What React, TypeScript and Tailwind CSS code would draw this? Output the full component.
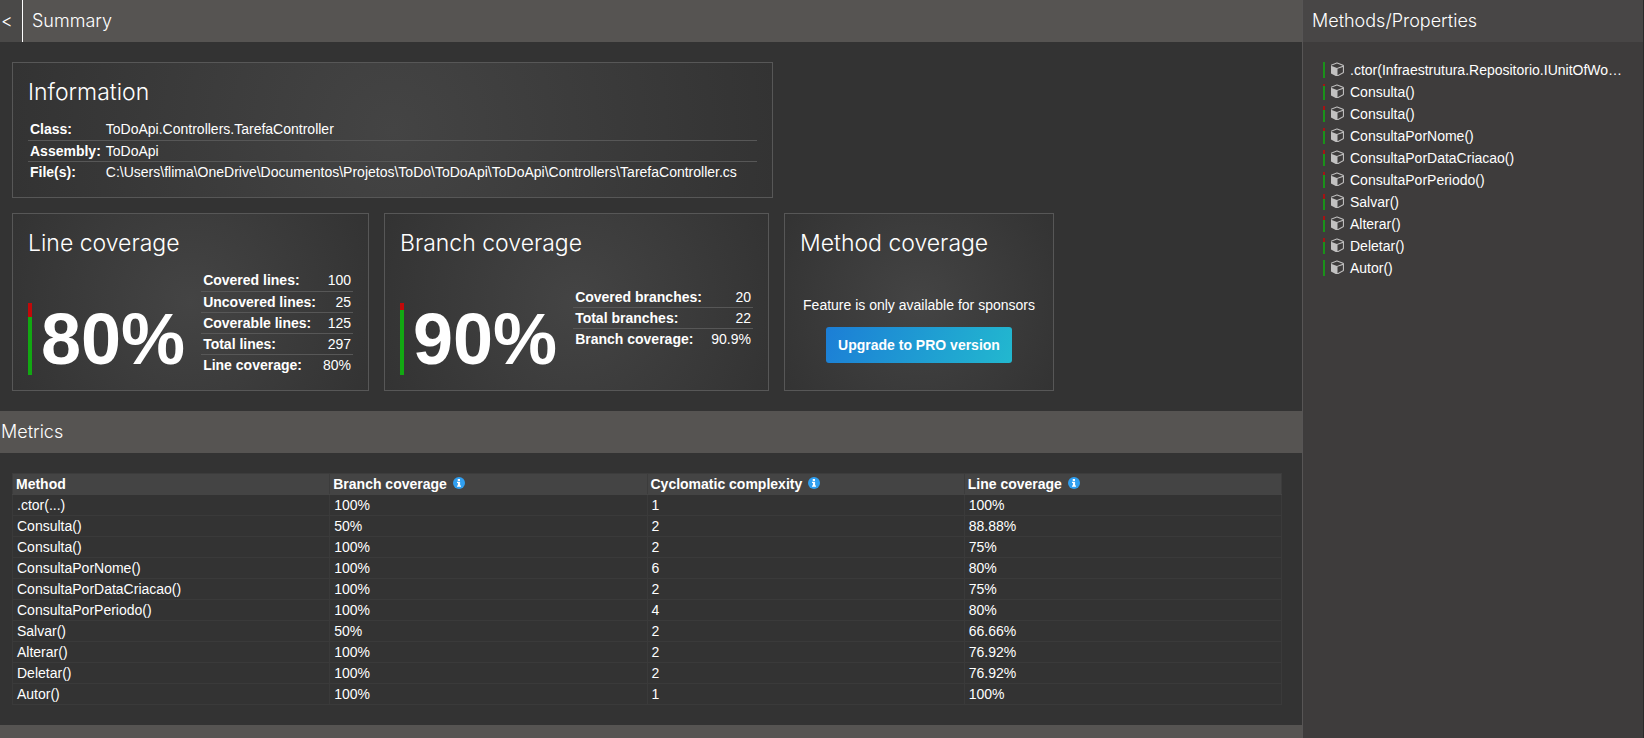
import type { ReactNode } from "react";

type MethodRow = {
  name: string;
  title: string;
  branch: string;
  complexity: number;
  line: string;
  covered: number;
};

const methods: MethodRow[] = [
  { name: ".ctor(...)", title: ".ctor(Infraestrutura.Repositorio.IUnitOfWo…", branch: "100%", complexity: 1, line: "100%", covered: 100 },
  { name: "Consulta()", title: "Consulta()", branch: "50%", complexity: 2, line: "88.88%", covered: 89 },
  { name: "Consulta()", title: "Consulta()", branch: "100%", complexity: 2, line: "75%", covered: 75 },
  { name: "ConsultaPorNome()", title: "ConsultaPorNome()", branch: "100%", complexity: 6, line: "80%", covered: 80 },
  { name: "ConsultaPorDataCriacao()", title: "ConsultaPorDataCriacao()", branch: "100%", complexity: 2, line: "75%", covered: 75 },
  { name: "ConsultaPorPeriodo()", title: "ConsultaPorPeriodo()", branch: "100%", complexity: 4, line: "80%", covered: 80 },
  { name: "Salvar()", title: "Salvar()", branch: "50%", complexity: 2, line: "66.66%", covered: 67 },
  { name: "Alterar()", title: "Alterar()", branch: "100%", complexity: 2, line: "76.92%", covered: 77 },
  { name: "Deletar()", title: "Deletar()", branch: "100%", complexity: 2, line: "76.92%", covered: 77 },
  { name: "Autor()", title: "Autor()", branch: "100%", complexity: 1, line: "100%", covered: 100 },
];

const headingFont = "font-['Century_Gothic','URW_Gothic',Inter,sans-serif] font-light";

function CubeIcon() {
  return (
    <svg viewBox="64 64 1536 1664" className="mb-[2px] h-[14px] w-[13px] shrink-0 fill-[#c2c1c1]" aria-hidden="true">
      <path d="M832 1629l640-349v-636l-640 233v752zm-64-865l698-254-698-254-698 254zm832-252v768q0 35-18 65t-49 47l-704 384q-28 16-61 16t-61-16l-704-384q-31-17-49-47t-18-65v-768q0-40 23-73t61-47l704-256q22-8 44-8t44 8l704 256q38 14 61 47t23 73z" />
    </svg>
  );
}

function InfoIcon() {
  return (
    <svg viewBox="0 0 24 24" className="h-3 w-3" aria-hidden="true">
      <circle cx="12" cy="12" r="12" fill="#309ff0" />
      <path fill="#fff" d="M9.5 4h4.5v4H9.500zM8 9.500h6.200v7.300H16V19.500H8v-2.700h1.800v-4.600H8z" />
    </svg>
  );
}

function Card({ title, width, children }: { title: string; width: string; children: ReactNode }) {
  return (
    <section className={`flex flex-col border border-[#575757] bg-[radial-gradient(circle,#444444,#333333)] px-[15px] pt-[13px] pb-[15px] ${width}`}>
      <h2 className={`${headingFont} text-[23px] leading-8`}>{title}</h2>
      {children}
    </section>
  );
}

function Facts({ rows, numeric }: { rows: [string, string][]; numeric?: boolean }) {
  return (
    <table className="w-full border-collapse leading-5">
      <tbody>
        {rows.map(([label, value]) => (
          <tr key={label} className="h-[21px] border-b border-[#575757] last:border-b-0">
            <th scope="row" className="w-px px-[2px] text-left font-bold whitespace-nowrap">{label}</th>
            <td className={numeric ? "pr-[2px] pl-1 text-right whitespace-nowrap" : "px-[3px] break-words"}>{value}</td>
          </tr>
        ))}
      </tbody>
    </table>
  );
}

function CoverageBar({ covered, className }: { covered: number; className: string }) {
  return (
    <span className={`flex shrink-0 flex-col bg-[#c10909] ${className}`}>
      <span className="mt-auto block bg-[#12a812]" style={{ height: `${covered}%` }} />
    </span>
  );
}

function BigPercentage({ value }: { value: number }) {
  return (
    <div className="flex shrink-0 items-end gap-[9px] self-end">
      <CoverageBar covered={value} className="h-[72px] w-1" />
      <span className="text-[72px] leading-[72px] font-bold">{value}%</span>
    </div>
  );
}

function HeaderCell({ children, info }: { children: string; info?: boolean }) {
  return (
    <th scope="col" className="border border-[#3c3c3c] border-b-[#444444] px-[3px] text-left font-bold">
      <span className="flex items-center gap-[6px]">
        {children}
        {info && (
          <a href="#info" aria-label={`About ${children}`} className="-mt-[2px]">
            <InfoIcon />
          </a>
        )}
      </span>
    </th>
  );
}

export default function App() {
  return (
    <div className="flex h-screen overflow-hidden bg-[#333333] font-['Liberation_Sans',Arial,sans-serif] text-[14px] leading-5 text-white">
      <main className="flex min-w-0 flex-1 flex-col overflow-hidden">
        <h1 className={`flex h-[42px] shrink-0 items-stretch bg-[#565452] text-[18px] ${headingFont}`}>
          <a href="#back" className="flex w-[23px] items-center border-r border-white bg-[#4a4948] pl-px">&lt;</a>
          <span className="flex items-center pl-[9px]">Summary</span>
        </h1>

        <div className="flex flex-wrap gap-[15px] px-3 py-5">
          <div className="flex w-full">
            <Card title="Information" width="min-w-[761px]">
              <div className="mt-[11px] flex flex-col">
                <Facts
                  rows={[
                    ["Class:", "ToDoApi.Controllers.TarefaController"],
                    ["Assembly:", "ToDoApi"],
                    ["File(s):", "C:\\Users\\flima\\OneDrive\\Documentos\\Projetos\\ToDo\\ToDoApi\\ToDoApi\\Controllers\\TarefaController.cs"],
                  ]}
                />
              </div>
            </Card>
          </div>
          <Card title="Line coverage" width="w-[357px]">
            <div className="mt-[2px] flex h-[114px] gap-4">
              <BigPercentage value={80} />
              <div className="flex-1 self-end">
                <Facts
                  numeric
                  rows={[
                    ["Covered lines:", "100"],
                    ["Uncovered lines:", "25"],
                    ["Coverable lines:", "125"],
                    ["Total lines:", "297"],
                    ["Line coverage:", "80%"],
                  ]}
                />
              </div>
            </div>
          </Card>
          <Card title="Branch coverage" width="w-[385px]">
            <div className="mt-[2px] flex h-[114px] gap-4">
              <BigPercentage value={90} />
              <div className="flex-1 self-center">
                <Facts
                  numeric
                  rows={[
                    ["Covered branches:", "20"],
                    ["Total branches:", "22"],
                    ["Branch coverage:", "90.9%"],
                  ]}
                />
              </div>
            </div>
          </Card>
          <Card title="Method coverage" width="w-[270px]">
            <div className="mt-[2px] flex h-[114px] flex-col items-center justify-end gap-3 pb-3">
              <p>Feature is only available for sponsors</p>
              <a href="#pro" className="rounded-[3px] bg-linear-[110deg] from-[#1c7ed6] to-[#22b8cf] px-3 py-2 font-bold">
                Upgrade to PRO version
              </a>
            </div>
          </Card>
        </div>

        <h1 className={`flex h-[42px] shrink-0 items-center bg-[#565452] pl-px text-[18px] ${headingFont}`}>Metrics</h1>

        <div className="py-5 pr-5 pl-3">
          <table className="w-full table-fixed border-collapse">
            <thead>
              <tr className="h-[21px] bg-[#444444]">
                <HeaderCell>Method</HeaderCell>
                <HeaderCell info>Branch coverage</HeaderCell>
                <HeaderCell info>Cyclomatic complexity</HeaderCell>
                <HeaderCell info>Line coverage</HeaderCell>
              </tr>
            </thead>
            <tbody>
              {methods.map((m, i) => (
                <tr key={i} className="h-[21px]">
                  <td className="border border-[#3a3a3a] px-1">
                    <a href={`#method-${i}`}>{m.name}</a>
                  </td>
                  <td className="border border-[#3a3a3a] px-1">{m.branch}</td>
                  <td className="border border-[#3a3a3a] px-1">{m.complexity}</td>
                  <td className="border border-[#3a3a3a] px-1">{m.line}</td>
                </tr>
              ))}
            </tbody>
          </table>
        </div>

        <div className="h-[42px] shrink-0 bg-[#565452]" />
      </main>

      <aside className="w-[342px] shrink-0 border-r border-l border-r-[#2a2929] border-l-[#575555] bg-[#3e3c3c]">
        <h1 className={`flex h-[42px] items-center bg-[#484646] pl-[9px] text-[18px] ${headingFont}`}>Methods/Properties</h1>
        <ul className="py-[17px] pr-[14px] pl-5">
          {methods.map((m, i) => (
            <li key={i}>
              <a href={`#method-${i}`} className="flex h-[22px] items-center">
                <CoverageBar covered={m.covered} className="mr-[6px] h-4 w-[2px] opacity-80" />
                <CubeIcon />
                <span className="ml-[6px] whitespace-nowrap">{m.title}</span>
              </a>
            </li>
          ))}
        </ul>
      </aside>
    </div>
  );
}
